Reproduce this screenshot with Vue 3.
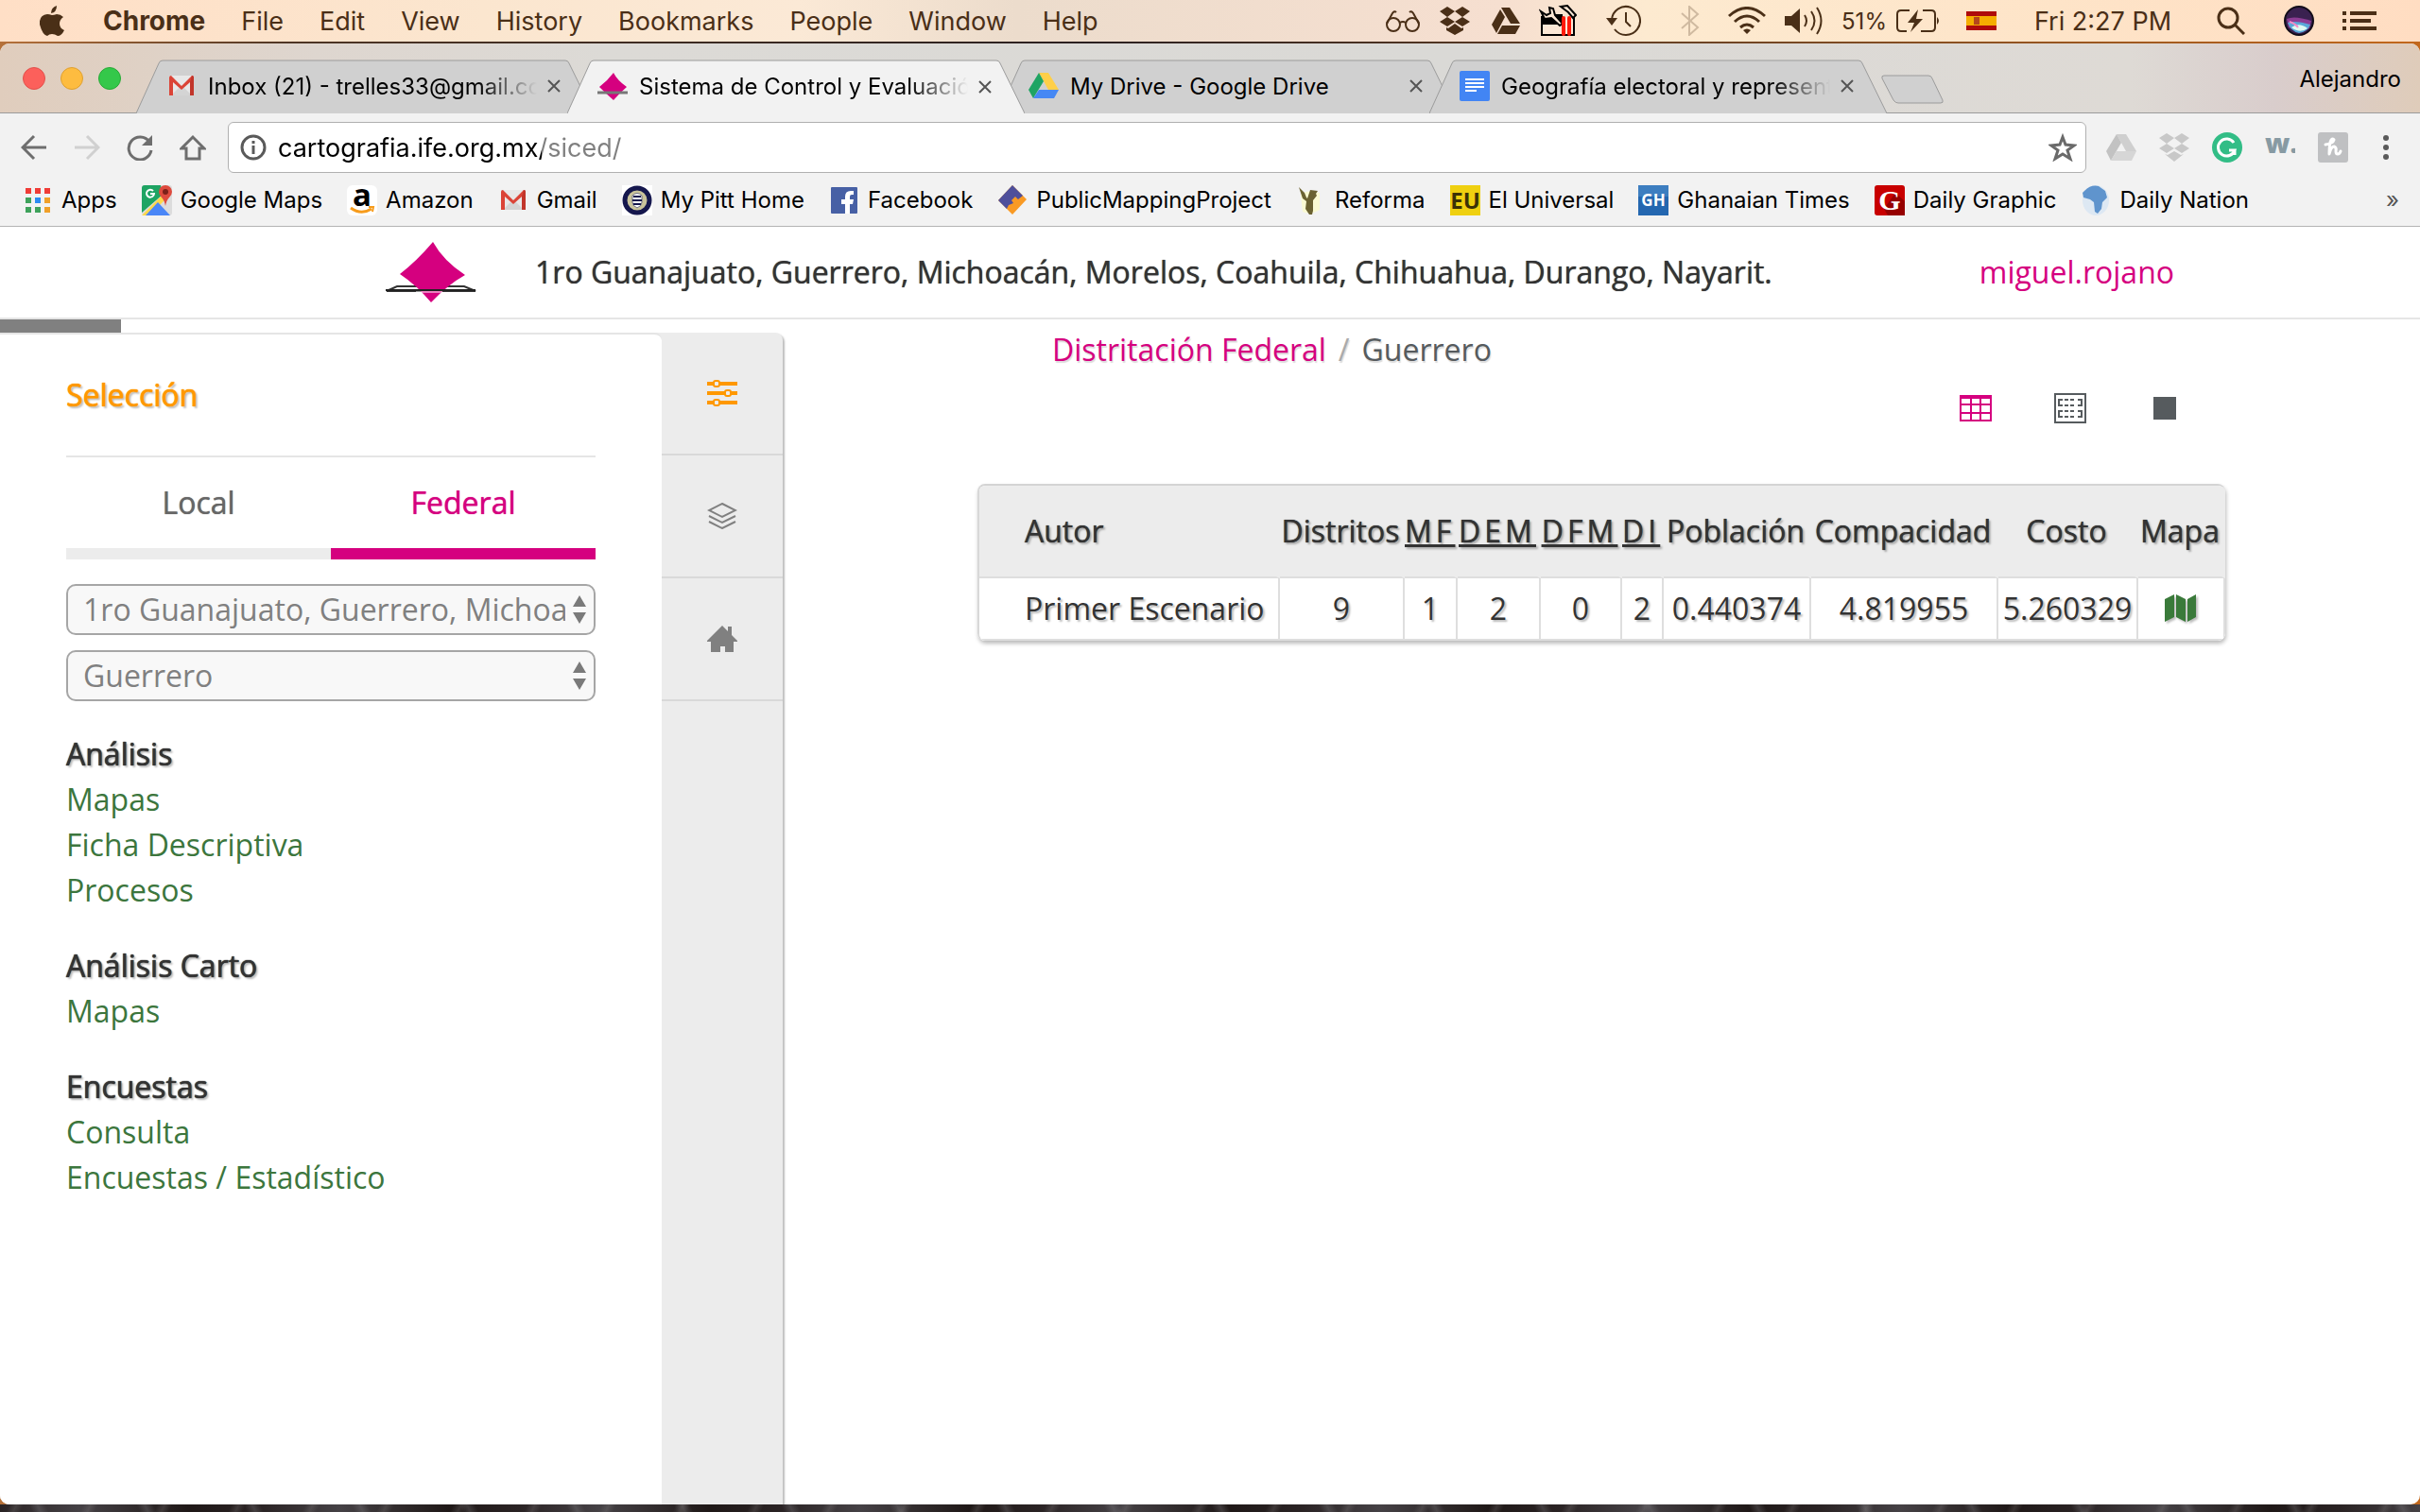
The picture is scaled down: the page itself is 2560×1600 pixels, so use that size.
<script setup>
import { ref } from 'vue'

const menus = ['File', 'Edit', 'View', 'History', 'Bookmarks', 'People', 'Window', 'Help']

const tabs = [
  { title: 'Inbox (21) - trelles33@gmail.com', icon: 'gmail', fade: true },
  { title: 'Sistema de Control y Evaluación', icon: 'ine', fade: true, active: true },
  { title: 'My Drive - Google Drive', icon: 'drive' },
  { title: 'Geografía electoral y representación', icon: 'docs', fade: true },
]

const bookmarks = [
  { label: 'Apps', icon: 'apps' },
  { label: 'Google Maps', icon: 'gmaps' },
  { label: 'Amazon', icon: 'amazon' },
  { label: 'Gmail', icon: 'gmail' },
  { label: 'My Pitt Home', icon: 'pitt' },
  { label: 'Facebook', icon: 'facebook' },
  { label: 'PublicMappingProject', icon: 'pmp' },
  { label: 'Reforma', icon: 'reforma' },
  { label: 'El Universal', icon: 'eu' },
  { label: 'Ghanaian Times', icon: 'gh' },
  { label: 'Daily Graphic', icon: 'dg' },
  { label: 'Daily Nation', icon: 'dn' },
]

const extensions = ['ext-drive', 'ext-dropbox', 'ext-grammarly', 'ext-w', 'ext-honey']

const groups = [
  { name: 'Análisis', links: ['Mapas', 'Ficha Descriptiva', 'Procesos'] },
  { name: 'Análisis Carto', links: ['Mapas'] },
  { name: 'Encuestas', links: ['Consulta', 'Encuestas / Estadístico'] },
]

const url = ref('cartografia.ife.org.mx/siced/')
const scope = ref('Federal')
</script>

<template>
  <svg class="sprite" aria-hidden="true">
    <symbol id="gmail" viewBox="0 0 32 32">
      <rect x="3" y="5" width="26" height="21" rx="1" fill="#e8e8e8" />
      <path d="M5 26 16 15l11 11z" fill="#d4d4d4" />
      <path d="M3 26V7q0-2 2-2l11 11L27 5q2 0 2 2v19h-4V12l-9 8-9-8v14z" fill="#db4437" />
      <path d="M27 5q2 0 2 2v19h-4V12z" fill="#c1352a" />
    </symbol>
    <symbol id="ine" viewBox="0 0 32 32">
      <path d="M17 1q4 8 14 15-7 6-14 14Q9 23 2 16 11 9 17 1z" fill="#d5007f" />
      <path d="M0 22h32" stroke="#777" stroke-width="3" />
    </symbol>
    <symbol id="drive" viewBox="0 0 32 32">
      <path d="M11 2h10l11 18H21z" fill="#ffcf48" />
      <path d="M11 2 0 20l5 9 11-18z" fill="#1fa463" />
      <path d="M11 20h21l-5 9H5z" fill="#4688f4" />
    </symbol>
    <symbol id="docs" viewBox="0 0 32 32">
      <rect width="32" height="32" rx="2" fill="#4285f4" />
      <path d="M6 9h20M6 13h20M6 17h20M6 21h12" stroke="#fff" stroke-width="2" />
    </symbol>
    <symbol id="apps" viewBox="0 0 32 32">
      <path d="M3 3h6v6H3zM13 3h6v6h-6zM23 3h6v6h-6z" fill="#f03c37" />
      <path d="M3 13h6v6H3zM3 23h6v6H3z" fill="#3ea25b" />
      <path d="M13 13h6v6h-6z" fill="#2b8cf2" />
      <path d="M13 23h6v6h-6z" fill="#3ea25b" />
      <path d="M23 13h6v6h-6zM23 23h6v6h-6z" fill="#f0a029" />
    </symbol>
    <symbol id="gmaps" viewBox="0 0 32 32">
      <rect width="32" height="32" rx="3" fill="#dcdcdc" />
      <path d="M3 0h17l2 10L0 29V3q0-3 3-3z" fill="#1fa463" />
      <path d="M0 32 22 10l4 4L8 32z" fill="#ffd84a" />
      <path d="M4 32 17 18l13 14z" fill="#4a86f7" />
      <path d="M25 22q-1-6-4-9-3-3-3-6a7 7 0 0 1 14 0q0 3-3 6t-4 9z" fill="#de4b3e" />
      <circle cx="25" cy="7" r="3" fill="#7b211a" />
      <path d="M12 6a4 4 0 1 0 1 3h-4" fill="none" stroke="#fff" stroke-width="2" />
    </symbol>
    <symbol id="amazon" viewBox="0 0 32 32">
      <rect width="32" height="32" rx="6" fill="#fff" />
      <text x="16" y="22" text-anchor="middle" font-size="33" font-weight="700" fill="#000" font-family="Open Sans, sans-serif">a</text>
      <path d="M4 24q11 8 22 1" fill="none" stroke="#f79c1c" stroke-width="3" />
      <path d="m23 23 5 0-1 5" fill="none" stroke="#f79c1c" stroke-width="2" />
    </symbol>
    <symbol id="pitt" viewBox="0 0 32 32">
      <rect width="32" height="32" fill="#fff" />
      <circle cx="16" cy="16" r="13" fill="#c9c39b" stroke="#15174d" stroke-width="5" />
      <path d="M11 11q5-5 10 0v7q0 4-5 6-5-2-5-6z" fill="#fff" stroke="#6a6a80" stroke-width="1" />
      <path d="M12 12h8M11 16h10M12 20h8" stroke="#15174d" stroke-width="2" />
    </symbol>
    <symbol id="facebook" viewBox="0 0 32 32">
      <rect x="2" y="2" width="28" height="28" rx="1" fill="#4760a5" />
      <path d="M17 30V20h-4v-5h4v-3q0-6 6-6h3v4h-2q-2 0-2 2v3h4l-1 5h-3v10z" fill="#fff" />
    </symbol>
    <symbol id="pmp" viewBox="0 0 32 32">
      <path d="M16 0 31 15 16 31 1 16z" fill="#f99a24" />
      <path d="m16 0 11 11-5 4-3-3-4 4 2 3-5 2-2 4-9-9z" fill="#4e4f9b" />
    </symbol>
    <symbol id="reforma" viewBox="0 0 32 32">
      <path d="M5 10q6-6 20-2v18q-10 6-18 2z" fill="#fafad2" />
      <path d="m3 2 6 6 2 5 1 1 3-9 8 1-2 3 1 2-4 5v11l-1 4h-3l-4-6 1-8-4-3z" fill="#6b6231" />
    </symbol>
    <symbol id="eu" viewBox="0 0 32 32">
      <rect width="32" height="32" fill="#efd010" />
      <text x="16" y="25" text-anchor="middle" font-size="24" font-weight="700" fill="#3b3206" font-family="Open Sans, sans-serif">EU</text>
    </symbol>
    <symbol id="gh" viewBox="0 0 32 32">
      <rect width="32" height="32" fill="#2467b0" />
      <path d="M0 0h32v12H0z" fill="#3d7ec0" />
      <text x="16" y="22" text-anchor="middle" font-size="17" font-weight="700" fill="#fff" font-family="Open Sans, sans-serif">GH</text>
    </symbol>
    <symbol id="dg" viewBox="0 0 32 32">
      <rect width="32" height="32" rx="3" fill="#c80000" />
      <path d="m22 8 10 9v15H14l-4-7z" fill="#960000" />
      <text x="16" y="26" text-anchor="middle" font-size="30" font-weight="700" fill="#fff" font-family="Liberation Serif, serif">G</text>
    </symbol>
    <symbol id="dn" viewBox="0 0 32 32">
      <ellipse cx="16" cy="16" rx="14" ry="16" fill="#dde8f3" />
      <path d="M4 6Q11-1 19 1l7 5 2 7-5 5-1 7-4 5-3-2-1-10-4-3-7-2-1-5z" fill="#5f94cd" />
    </symbol>
    <symbol id="ext-drive" viewBox="0 0 32 32">
      <path d="M11 2h10l11 18H21z" fill="#cfcfcf" />
      <path d="M11 2 0 20l5 10 11-19z" fill="#c2c2c2" />
      <path d="M11 20h21l-5 10H5z" fill="#d6d6d6" />
    </symbol>
    <symbol id="dropbox-shape" viewBox="0 0 34 32">
      <path d="m9 1 8 5-8 6-8-6zM25 1l8 5-8 6-8-6zM9 12l8 5-8 5-8-5zM25 12l8 5-8 5-8-5zM17 19l7 5 2-1v3l-9 5-9-5v-3l2 1z" fill="currentColor" />
    </symbol>
    <symbol id="ext-dropbox" viewBox="0 0 32 32">
      <path d="m8 1 8 5-8 6-8-6zM24 1l8 5-8 6-8-6zM8 12l8 5-8 5-8-5zM24 12l8 5-8 5-8-5zM16 20l7 4 3-1-10 8-10-8 3 1z" fill="#c8c8c8" />
    </symbol>
    <symbol id="ext-grammarly" viewBox="0 0 32 32">
      <circle cx="16" cy="16" r="16" fill="#32bd86" />
      <path d="M23 11a9 9 0 1 0 1 8h-6m6 0v5" fill="none" stroke="#fff" stroke-width="3" />
    </symbol>
    <symbol id="ext-w" viewBox="0 0 32 32">
      <text x="0" y="22" font-size="29" font-weight="800" fill="#879aa3" font-family="Open Sans, sans-serif">w.</text>
    </symbol>
    <symbol id="ext-honey" viewBox="0 0 32 32">
      <rect width="32" height="32" rx="3" fill="#bfc0c2" />
      <path d="M8 13q8-1 9-5-1-2-3 0-2 3-2 15 2-8 5-8 3 1 2 5 0 3 2 3 2 0 3-3" fill="none" stroke="#fff" stroke-width="3" stroke-linecap="round" stroke-linejoin="round" />
    </symbol>
    <symbol id="map" viewBox="0 0 34 30">
      <path d="M0 5 10 0v24L0 29zM12 0l10 5v24l-10-5zM24 5l9-5v24l-9 5z" fill="currentColor" />
    </symbol>
  </svg>

  <div class="desktop">
    <header class="menubar">
      <svg class="apple" viewBox="0 0 26 32" width="26" height="32">
        <path d="M18 0q0 7-6 8 0-6 6-8zM13 10q2 0 5-1 4 0 7 3-4 3-4 7 0 5 5 7-3 6-7 6-3-2-6-2t-5 2Q3 31 0 20-1 10 8 9q2 0 5 1z" fill="currentColor" />
      </svg>
      <nav class="menus">
        <strong>Chrome</strong>
        <span v-for="m in menus" :key="m">{{ m }}</span>
      </nav>
      <div class="status">
        <span class="slot s56"><svg viewBox="0 0 38 24" width="38" height="24" fill="none" stroke="currentColor" stroke-width="2"><circle cx="9" cy="16" r="7" /><circle cx="29" cy="16" r="7" /><path d="M16 14q3-2 6 0M2 15 8 4q2-3 4-1M36 15 30 4q-2-3-4-1" /></svg></span>
        <span class="slot s54"><svg width="34" height="32"><use href="#dropbox-shape" /></svg></span>
        <span class="slot s54"><svg viewBox="0 0 30 28" width="30" height="28" fill="currentColor"><path d="M10 0h9l11 17H20zM9 2l5 8L5 27l-5-9zM11 19h19l-5 9H6z" /></svg></span>
        <span class="slot s56"><svg viewBox="0 0 40 34" width="40" height="34"><path d="M3 14h35v18H3z" fill="#fce8d6" /><path d="M3 10h22v11H3z" fill="#000" /><path d="M3 12v20h34V12" fill="none" stroke="#000" stroke-width="2" /><path d="m2 7 6 4 4-2-1-6 4 1 2 7 8 9-3 2-9-8-7 1zM23 2l7-1 9 10-3 3-5-6z" fill="#fce8d6" stroke="#000" stroke-width="2" /><path d="M26 14v17M32 14v17" stroke="#ff1a0a" stroke-width="4" stroke-linecap="round" /></svg></span>
        <span class="slot s82"><svg viewBox="0 0 38 34" width="38" height="34" fill="none" stroke="currentColor" stroke-width="2"><path d="M7 16a15 15 0 1 1 3 10" /><path d="M22 8v10l5 5" /><path d="M1 14h12l-6 8z" fill="currentColor" stroke="none" /></svg></span>
        <span class="slot s60"><svg class="faint" viewBox="0 0 20 32" width="20" height="32" fill="none" stroke="currentColor" stroke-width="2"><path d="m1 8 17 15-9 8V1l9 8L1 24" /></svg></span>
        <span class="slot s60"><svg viewBox="0 0 42 30" width="42" height="30" fill="none" stroke="currentColor" stroke-width="3"><path d="M2 10q19-17 38 0M8 16q13-12 26 0M14 22q7-6 14 0" /><path d="m21 29-4-4q4-3 8 0z" fill="currentColor" stroke="none" /></svg></span>
        <span class="slot s62"><svg viewBox="0 0 42 32" width="42" height="32" fill="none" stroke="currentColor" stroke-width="2"><path d="M0 11h7l9-8v26l-9-8H0z" fill="currentColor" stroke="none" /><path d="M21 10q4 6 0 12M28 6q7 10 0 20M34 2q9 14 0 28" /></svg></span>
        <span class="slot s120"><span class="battery">51%</span><svg viewBox="0 0 46 26" width="46" height="26" fill="none" stroke="currentColor" stroke-width="2"><path d="M14 2H5Q1 2 1 6v14q0 4 4 4h6M28 2h9q4 0 4 4v14q0 4-4 4H26" /><path d="M23 1 12 15h7l-4 10 13-14h-7z" fill="currentColor" stroke="none" /><path d="M43 9q4 4 0 8z" fill="currentColor" stroke="none" /></svg></span>
        <span class="slot s72"><svg viewBox="0 0 32 20" width="32" height="20"><path d="M0 0h32v20H0z" fill="#ae0b0b" /><path d="M0 5h32v10H0z" fill="#f5ae00" /><path d="M8 6h6v8H8z" fill="#b4461c" /></svg></span>
        <span class="slot s185">Fri 2:27 PM</span>
        <span class="slot s86"><svg viewBox="0 0 30 30" width="30" height="30" fill="none" stroke="currentColor" stroke-width="3"><circle cx="12" cy="12" r="10" /><path d="m19 19 10 10" /></svg></span>
        <span class="slot s58"><svg viewBox="0 0 32 32" width="32" height="32"><circle cx="16" cy="16" r="15" fill="#3a2150" stroke="#120c18" stroke-width="2" /><path d="M3 14q8-4 26 2l-2 8q-10 6-22-1z" fill="#8c3c94" /><path d="M4 18q8-3 24 2-3 8-12 9-9-2-12-11z" fill="#5aa8d8" /><path d="M8 23q8-6 17 1-8 6-17-1z" fill="#dffaf2" /><path d="M6 17q6 2 9 6" stroke="#f58bc6" stroke-width="2" fill="none" /></svg></span>
        <span class="slot s70"><svg viewBox="0 0 36 20" width="36" height="20" stroke="currentColor" stroke-width="4"><path d="M8 2h28M8 10h22M8 18h28M0 2h4M0 10h4M0 18h4" /></svg></span>
      </div>
    </header>

    <div class="window">
      <div class="titlebar">
        <div class="lights"><i class="red"></i><i class="yellow"></i><i class="green"></i></div>
        <div class="tabs">
          <div v-for="t in tabs" :key="t.title" class="tab" :class="{ active: t.active }">
            <svg class="shape" viewBox="0 0 484 57" width="484" height="57">
              <path d="M0 57 24 4q1-3 4-3h426q3 0 4 3l26 53" :fill="t.active ? '#f2f2f2' : '#d0d0d0'" stroke="#9b9b9b" />
            </svg>
            <svg class="fav" width="32" height="32"><use :href="'#' + t.icon" /></svg>
            <span class="tab-title" :class="{ fade: t.fade }">{{ t.title }}</span>
            <button class="close" type="button" aria-label="Close tab">
              <svg viewBox="0 0 16 16" width="16" height="16"><path d="m2 2 12 12M14 2 2 14" stroke="#555" stroke-width="2" /></svg>
            </button>
          </div>
        </div>
        <button class="newtab" type="button" aria-label="New tab">
          <svg viewBox="0 0 66 32" width="66" height="32"><path d="M3 1h47q3 0 4 3l11 23q1 3-2 3H18q-3 0-5-3L1 4q-1-3 2-3z" fill="#d0d0d0" stroke="#9b9b9b" /></svg>
        </button>
        <span class="profile">Alejandro</span>
      </div>

      <div class="toolbar">
        <div class="nav">
          <button type="button" aria-label="Back"><svg viewBox="0 0 28 28" width="28" height="28"><path d="M14 2 2 14l12 12M2 14h25" /></svg></button>
          <button type="button" aria-label="Forward" class="off"><svg viewBox="0 0 28 28" width="28" height="28"><path d="m14 2 12 12-12 12M1 14h25" /></svg></button>
          <button type="button" aria-label="Reload"><svg viewBox="0 0 28 28" width="28" height="28"><path d="M24 8A12 12 0 1 0 26 17" /><path d="M27 1v11H16z" fill="#6e6e6e" stroke="none" /></svg></button>
          <button type="button" aria-label="Home"><svg viewBox="0 0 28 28" width="28" height="28"><path d="m2 15 12-12 12 12h-5v11H7V15z" /></svg></button>
        </div>
        <div class="omnibox">
          <svg viewBox="0 0 28 28" width="28" height="28" fill="none" stroke="#5a5a5a"><circle cx="14" cy="14" r="12" stroke-width="3" /><path d="M14 12v9M14 7v3" stroke-width="3" /></svg>
          <input v-model="url" type="text" aria-label="Address" />
          <svg viewBox="0 0 30 30" width="30" height="30" fill="none" stroke="#6a6a6a" stroke-width="3"><path d="m15 4 3 8 9 1-7 5 3 9-8-5-8 5 3-9-7-5 9-1z" /></svg>
        </div>
        <div class="exts">
          <svg v-for="e in extensions" :key="e" width="32" height="32"><use :href="'#' + e" /></svg>
        </div>
        <button class="more" type="button" aria-label="Menu">
          <svg viewBox="0 0 8 28" width="8" height="28" fill="#5a5a5a"><circle cx="4" cy="4" r="3" /><circle cx="4" cy="14" r="3" /><circle cx="4" cy="24" r="3" /></svg>
        </button>
      </div>

      <nav class="bookmarks">
        <a v-for="b in bookmarks" :key="b.label" href="#">
          <svg width="32" height="32"><use :href="'#' + b.icon" /></svg>{{ b.label }}
        </a>
        <span class="overflow">»</span>
      </nav>

      <div class="page">
        <header class="masthead">
          <svg viewBox="0 0 96 64" width="96" height="64">
            <path d="M12 47h71l12 5H1z" fill="#fff" stroke="#333" stroke-width="2" />
            <path d="M50 0q11 20 34 35Q66 45 48 64 33 46 15 34 33 20 50 0z" fill="#d5007f" />
            <path d="M0 51h95" stroke="#222" stroke-width="2" />
            <path d="M32 53h28" stroke="#fff" stroke-width="1" />
          </svg>
          <h1>1ro Guanajuato, Guerrero, Michoacán, Morelos, Coahuila, Chihuahua, Durango, Nayarit.</h1>
          <a class="user" href="#">miguel.rojano</a>
        </header>

        <div class="body">
          <aside class="side">
            <div class="handle"></div>
            <div class="side-box">
              <div class="panel">
                <h2>Selección</h2>
                <div class="scopes">
                  <button v-for="s in ['Local', 'Federal']" :key="s" type="button" :class="{ on: scope === s }" @click="scope = s">{{ s }}</button>
                </div>
                <div class="picker">
                  <select aria-label="Entidades">
                    <option>1ro Guanajuato, Guerrero, Michoacán, Morelos, Coahuila, Chihuahua, Durango, Nayarit.</option>
                  </select>
                  <svg viewBox="0 0 16 30" width="16" height="30"><path d="m8 0 7 12H1zM8 30 1 18h14z" fill="#7a7a7a" /></svg>
                </div>
                <div class="picker">
                  <select aria-label="Estado">
                    <option>Guerrero</option>
                  </select>
                  <svg viewBox="0 0 16 30" width="16" height="30"><path d="m8 0 7 12H1zM8 30 1 18h14z" fill="#7a7a7a" /></svg>
                </div>
                <section v-for="g in groups" :key="g.name" class="group">
                  <h3>{{ g.name }}</h3>
                  <a v-for="l in g.links" :key="l" href="#">{{ l }}</a>
                </section>
              </div>
              <div class="rail">
                <button type="button" aria-label="Selección">
                  <svg viewBox="0 0 32 28" width="32" height="28"><path d="M0 4h32M0 14h32M0 24h32" stroke="#ff9800" stroke-width="4" /><g fill="#ececec" stroke="#ff9800" stroke-width="2"><rect x="7" y="1" width="6" height="6" rx="2" /><rect x="19" y="11" width="6" height="6" rx="2" /><rect x="7" y="21" width="6" height="6" rx="2" /></g></svg>
                </button>
                <button type="button" aria-label="Capas">
                  <svg viewBox="0 0 32 28" width="32" height="28" fill="none" stroke="#808080" stroke-width="2"><path d="m16 1 14 7-14 7L2 8zM2 14l14 7 14-7M2 20l14 7 14-7" /></svg>
                </button>
                <button type="button" aria-label="Inicio">
                  <svg viewBox="0 0 32 28" width="32" height="28" fill="#808080"><path d="m16 0 6 6V1h4v9l6 6v1h-4v11h-9v-6h-5v6H4V17H0v-1z" /></svg>
                </button>
              </div>
            </div>
          </aside>

          <main>
            <nav class="crumbs"><a href="#">Distritación Federal</a><i>/</i><span>Guerrero</span></nav>
            <div class="views">
              <button type="button" aria-label="Tabla"><svg viewBox="0 0 34 28" width="34" height="28" fill="none" stroke="#d5007f" stroke-width="2"><path d="M1 1h32v26H1zM1 10h32M1 19h32M12 1v26M22 1v26" /><path d="M0 2h34" stroke-width="4" /></svg></button>
              <button type="button" aria-label="Fichas"><svg viewBox="0 0 34 32" width="34" height="32" fill="none" stroke="#565b5e" stroke-width="2"><path d="M1 1h32v30H1zM9 7H5v6h4M25 7h4v6h-4M9 19H5v6h4M25 19h4v6h-4" /><path d="M11 7h12M11 13h12M11 19h12M11 25h12" stroke-dasharray="4 2" /></svg></button>
              <button type="button" aria-label="Bloque"><svg viewBox="0 0 24 24" width="24" height="24"><path d="M0 0h24v24H0z" fill="#565b5e" /></svg></button>
            </div>
            <table>
              <colgroup>
                <col /><col class="c132" /><col class="c56" /><col class="c88" /><col class="c86" /><col class="c44" /><col class="c156" /><col class="c198" /><col class="c148" /><col class="c92" />
              </colgroup>
              <thead>
                <tr>
                  <th class="first">Autor</th>
                  <th>Distritos</th>
                  <th><abbr>MF</abbr></th>
                  <th><abbr>DEM</abbr></th>
                  <th><abbr>DFM</abbr></th>
                  <th><abbr>DI</abbr></th>
                  <th>Población</th>
                  <th>Compacidad</th>
                  <th>Costo</th>
                  <th>Mapa</th>
                </tr>
              </thead>
              <tbody>
                <tr>
                  <td class="first">Primer Escenario</td>
                  <td>9</td>
                  <td>1</td>
                  <td>2</td>
                  <td>0</td>
                  <td>2</td>
                  <td>0.440374</td>
                  <td>4.819955</td>
                  <td>5.260329</td>
                  <td><a class="map" href="#" aria-label="Ver mapa"><svg width="34" height="30"><use href="#map" /></svg></a></td>
                </tr>
              </tbody>
            </table>
          </main>
        </div>
      </div>
    </div>
    <div class="ground"></div>
  </div>
</template>

<style>
body {
  background: #fff;
}
</style>

<style scoped>
* {
  box-sizing: border-box;
}
button {
  background: none;
  border: 0;
  padding: 0;
  font: inherit;
  color: inherit;
}
a {
  text-decoration: none;
  color: inherit;
}
svg {
  display: block;
  flex: none;
}
.sprite {
  display: none;
}
.desktop {
  display: flex;
  flex-direction: column;
  min-height: 100vh;
  font-family: Inter, sans-serif;
  background: linear-gradient(90deg, #b5713a, #4d3524 12%, #2b2020 45%, #6b4324 70%, #c2681c);
}

/* macOS menu bar */
.menubar {
  display: flex;
  align-items: center;
  height: 44px;
  margin-bottom: 2px;
  padding: 0 29px 0 42px;
  font-size: 27px;
  color: #4a2f17;
  background: linear-gradient(90deg, #ffdfc6, #fbe6cf 20%, #fbe9d6 33%, #ecdccc 42%, #f6dfd0 62%, #fdead0 68%, #fee4c8 85%, #ffddc2);
  white-space: nowrap;
}
.apple {
  margin-right: 41px;
}
.menus {
  display: flex;
  align-items: center;
  gap: 38px;
}
.menus strong {
  font-size: 28px;
}
.status {
  display: flex;
  align-items: center;
  margin-left: auto;
}
.slot {
  display: flex;
  align-items: center;
  justify-content: center;
  gap: 10px;
}
.s54 { width: 54px; }
.s56 { width: 56px; }
.s58 { width: 58px; }
.s60 { width: 60px; }
.s62 { width: 62px; }
.s70 { width: 70px; }
.s72 { width: 72px; }
.s82 { width: 82px; }
.s86 { width: 86px; }
.s120 { width: 120px; }
.s185 { width: 185px; }
.battery {
  font-size: 24px;
}
.faint {
  opacity: 0.25;
}

/* Browser chrome */
.window {
  display: flex;
  flex-direction: column;
  flex: 1;
  border-radius: 10px;
  overflow: hidden;
  background: #fff;
}
.titlebar {
  display: flex;
  align-items: flex-end;
  height: 74px;
  border-bottom: 1px solid #9b9b9b;
  background: linear-gradient(90deg, #e0cdbd, #ded6cf 13%, #dcdad6 25%, #dad9d6 60%, #dedad5 88%, #d9cdcc 94%, #dfccba);
}
.lights {
  display: flex;
  gap: 16px;
  align-self: center;
  padding-left: 24px;
  width: 144px;
}
.lights i {
  width: 24px;
  height: 24px;
  border-radius: 50%;
}
.red { background: #fc605b; border: 1px solid #e2504b; }
.yellow { background: #fdbc40; border: 1px solid #dfa02f; }
.green { background: #34c84a; border: 1px solid #27aa35; }
.tabs {
  display: flex;
  margin-bottom: -1px;
}
.tab {
  position: relative;
  display: flex;
  align-items: center;
  width: 484px;
  height: 57px;
  margin-right: -28px;
  padding: 0 34px 0 32px;
  font-size: 24px;
  color: #000;
}
.tab.active {
  z-index: 1;
}
.tab:not(.active) {
  border-bottom: 1px solid #9b9b9b;
}
.shape {
  position: absolute;
  left: 0;
  top: 0;
}
.fav,
.tab-title,
.close {
  position: relative;
}
.tab-title {
  flex: 1;
  min-width: 0;
  margin: 0 10px 0 12px;
  white-space: nowrap;
  overflow: hidden;
}
.fade {
  mask-image: linear-gradient(90deg, #000 82%, transparent);
}
.newtab {
  margin: 0 0 8px 22px;
}
.profile {
  margin-left: auto;
  align-self: center;
  padding: 2px 20px 0 0;
  font-size: 24px;
}
.toolbar {
  display: flex;
  align-items: center;
  height: 72px;
  padding: 0 32px 0 22px;
  background: #f2f2f2;
}
.nav {
  display: flex;
  gap: 28px;
  margin-right: 23px;
}
.nav svg {
  fill: none;
  stroke: #6e6e6e;
  stroke-width: 3;
}
.nav .off {
  opacity: 0.25;
}
.omnibox {
  display: flex;
  align-items: center;
  gap: 12px;
  flex: 1;
  height: 54px;
  padding: 0 9px 0 12px;
  border: 1px solid #b0b0b0;
  border-radius: 6px;
  background: #fff;
}
.omnibox input {
  flex: 1;
  height: 44px;
  border: 0;
  padding: 0;
  font: 27px Inter, sans-serif;
  color: transparent;
  background: linear-gradient(90deg, #000 279px, #808080 279px);
  background-clip: text;
}
.exts {
  display: flex;
  gap: 24px;
  margin: 0 36px 0 21px;
}
.bookmarks {
  display: flex;
  align-items: center;
  gap: 26px;
  height: 48px;
  padding: 0 22px 8px 24px;
  border-bottom: 1px solid #b4b4b4;
  background: #f2f2f2;
  font-size: 24px;
  color: #000;
  white-space: nowrap;
}
.bookmarks a {
  display: flex;
  align-items: center;
  gap: 9px;
}
.overflow {
  margin-left: auto;
  color: #555;
}

/* Application */
.page {
  display: flex;
  flex-direction: column;
  flex: 1;
  font-family: "Open Sans", sans-serif;
  font-size: 32px;
  line-height: 48px;
  color: #333;
}
.masthead {
  display: flex;
  align-items: center;
  height: 98px;
  padding: 0 260px 0 408px;
  border-bottom: 2px solid #e5e5e5;
}
h1,
h2,
h3 {
  margin: 0;
  font-size: 32px;
  font-weight: 400;
}
h1 {
  margin-left: 62px;
  white-space: nowrap;
  text-shadow: 0 0 1px currentColor;
}
.user {
  margin-left: auto;
  color: #d5007f;
}
.body {
  display: flex;
  flex: 1;
}
.side {
  display: flex;
  flex-direction: column;
  width: 830px;
  padding-right: 2px;
}
.handle {
  width: 128px;
  height: 14px;
  background: #808080;
}
.side-box {
  display: flex;
  flex: 1;
  border-radius: 0 8px 0 0;
  background: #ececec;
  box-shadow: 2px 2px 2px #bdbdbd;
}
.panel {
  flex: 1;
  padding: 0 70px;
  border-top: 2px solid #e5e5e5;
  border-radius: 0 8px 0 0;
  background: #fff;
}
.panel h2 {
  line-height: 128px;
  border-bottom: 2px solid #e5e5e5;
  color: #ff9800;
  text-shadow: 0 0 1px currentColor, 0 0 1px currentColor, 2px 2px 2px #bbb;
}
.scopes {
  display: flex;
  margin-bottom: 26px;
}
.scopes button {
  flex: 1;
  height: 108px;
  border-bottom: 12px solid #ececec;
  color: #666;
  text-shadow: 0 0 1px currentColor;
}
.scopes .on {
  border-color: #d5007f;
  color: #d5007f;
}
.picker {
  position: relative;
  margin-bottom: 16px;
}
.picker select {
  display: block;
  width: 100%;
  height: 54px;
  padding: 0 30px 0 16px;
  appearance: none;
  border: 2px solid #a6a6a6;
  border-radius: 10px;
  background: #f8f8f8;
  font: inherit;
  line-height: 48px;
  color: #808080;
}
.picker svg {
  position: absolute;
  right: 9px;
  top: 12px;
}
.group {
  display: flex;
  flex-direction: column;
  align-items: flex-start;
  margin-top: 32px;
}
.group h3 {
  text-shadow: 0 0 1px currentColor, 0 0 1px currentColor, 2px 2px 2px #bbb;
}
.group a {
  color: #3c763d;
}
.rail {
  width: 128px;
}
.rail button {
  display: grid;
  place-items: center;
  width: 100%;
  height: 130px;
  border-bottom: 2px solid #d9d9d9;
}
main {
  flex: 1;
  padding: 8px 206px 0 204px;
}
.crumbs {
  display: flex;
  gap: 13px;
  padding-left: 79px;
  color: #565b5e;
  text-shadow: 1px 2px 1px #ddd;
}
.crumbs a {
  color: #d5007f;
}
.crumbs i {
  font-style: normal;
  color: #aaa;
}
.views {
  display: flex;
  justify-content: flex-end;
  padding-right: 14px;
  margin: 12px 0 54px;
}
.views button {
  display: grid;
  place-items: center;
  width: 100px;
  height: 52px;
}
table {
  width: 100%;
  table-layout: fixed;
  border-collapse: separate;
  border-spacing: 0;
  border-top: 2px solid #d4d4d4;
  border-left: 2px solid #d8d8d8;
  border-radius: 8px;
  overflow: hidden;
  box-shadow: 1px 3px 4px #bbb;
  text-align: center;
}
.c44 { width: 44px; }
.c56 { width: 56px; }
.c86 { width: 86px; }
.c88 { width: 88px; }
.c92 { width: 92px; }
.c132 { width: 132px; }
.c148 { width: 148px; }
.c156 { width: 156px; }
.c198 { width: 198px; }
th {
  height: 98px;
  padding: 0;
  border-right: 4px solid #ececec;
  border-bottom: 2px solid #dedede;
  background: #ececec;
  font-weight: 400;
  white-space: nowrap;
  text-shadow: 0 0 1px currentColor, 2px 2px 2px #aaa;
}
td {
  height: 66px;
  padding: 0;
  border-right: 2px solid #dedede;
  border-bottom: 2px solid #dedede;
  background: #fff;
  text-shadow: 2px 2px 2px #bbb;
}
.first {
  padding-left: 48px;
  text-align: left;
}
abbr {
  letter-spacing: 4px;
  text-decoration: underline;
}
.map svg {
  margin: 0 auto;
  color: #3a7a3a;
  filter: drop-shadow(2px 2px 1px #bbb);
}

/* Strip of wallpaper below the window */
.ground {
  height: 8px;
  background:
    repeating-linear-gradient(115deg, transparent 0 9px, rgba(160, 155, 155, 0.2) 16px, transparent 23px 71px),
    repeating-linear-gradient(65deg, transparent 0 31px, rgba(150, 150, 155, 0.25) 39px, transparent 47px 103px),
    repeating-linear-gradient(80deg, #2a2324 0, #454145 83px, #1f1817 197px, #2a2324 271px);
}
</style>
